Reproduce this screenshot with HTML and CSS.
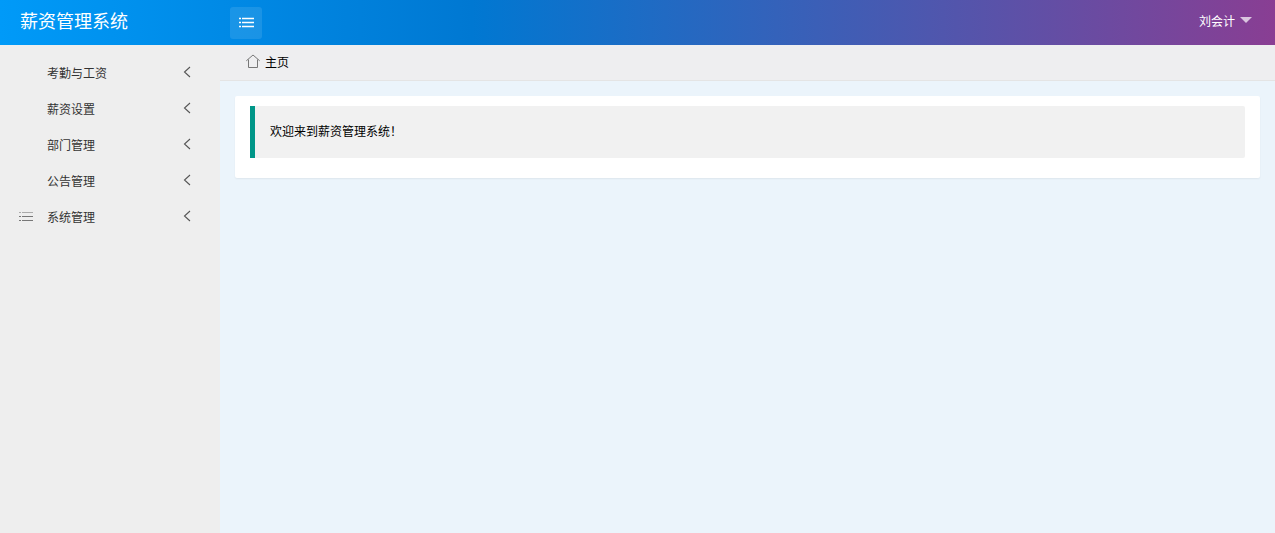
FILE: index.html
```html
<!DOCTYPE html>
<html lang="zh-CN">
<head>
    <meta charset="UTF-8">
    <title>薪资管理系统</title>
    <link rel="stylesheet" href="styles.css">
</head>
<body>
    <!-- 顶部导航 -->
    <header class="header">
        <div class="logo">薪资管理系统</div>
        <button class="toggle" type="button">
            <svg width="16" height="16" viewBox="0 0 16 16"><path d="M1 3.500h2M4 3.500h12M1 7.500h2M4 7.500h12M1 11.500h2M4 11.500h12"/></svg>
        </button>
        <div class="user">刘会计<span class="caret"></span></div>
    </header>

    <div class="wrap">
        <!-- 左侧菜单 -->
        <nav class="side">
            <a class="item"><i class="icon"></i><span>考勤与工资</span><svg class="arrow" width="8" height="12" viewBox="0 0 8 12"><path d="M7 1L1.5 6 7 11"/></svg></a>
            <a class="item"><i class="icon"></i><span>薪资设置</span><svg class="arrow" width="8" height="12" viewBox="0 0 8 12"><path d="M7 1L1.5 6 7 11"/></svg></a>
            <a class="item"><i class="icon"></i><span>部门管理</span><svg class="arrow" width="8" height="12" viewBox="0 0 8 12"><path d="M7 1L1.5 6 7 11"/></svg></a>
            <a class="item"><i class="icon"></i><span>公告管理</span><svg class="arrow" width="8" height="12" viewBox="0 0 8 12"><path d="M7 1L1.5 6 7 11"/></svg></a>
            <a class="item">
                <i class="icon"><svg width="15" height="12" viewBox="0 0 15 12"><path class="light" d="M0 1.500h2M3 1.500h11"/><path d="M0 5.500h2M3 5.500h11M0 9.500h2M3 9.500h11"/></svg></i>
                <span>系统管理</span><svg class="arrow" width="8" height="12" viewBox="0 0 8 12"><path d="M7 1L1.5 6 7 11"/></svg>
            </a>
        </nav>

        <!-- 主体内容 -->
        <main class="main">
            <div class="tabs">
                <svg class="home" width="14" height="14" viewBox="0 0 14 14"><path d="M.3 6.800L7 1l6.700 5.800M2.500 5.500v8h9v-8"/></svg>
                <span>主页</span>
            </div>
            <div class="card">
                <blockquote class="quote">欢迎来到薪资管理系统！</blockquote>
            </div>
        </main>
    </div>
</body>
</html>
```
FILE: styles.css
```css
* {
    box-sizing: border-box;
}
body {
    margin: 0;
    height: 100vh;
    display: flex;
    flex-direction: column;
    overflow: hidden;
    font: 12px/24px "Noto Sans CJK SC", sans-serif;
    color: #000;
    background: #ebf4fb;
}
svg {
    display: block;
    fill: none;
    stroke: #777;
}
.header {
    display: flex;
    align-items: center;
    flex: none;
    height: 45px;
    padding-right: 23px;
    color: #fff;
    background: linear-gradient(to right, #009af8, #0078d2 37%, #893e93);
}
.logo {
    width: 230px;
    padding: 0 0 6px 20px;
    font-size: 18px;
}
.toggle {
    display: flex;
    align-items: center;
    justify-content: center;
    width: 32px;
    height: 32px;
    padding: 0;
    border: none;
    border-radius: 3px;
    background: rgba(255, 255, 255, .1);
}
.toggle svg {
    stroke: #fff;
    stroke-width: 1.3;
}
.user {
    display: flex;
    align-items: center;
    margin-left: auto;
    padding-bottom: 3px;
}
.caret {
    margin: 0 0 3px 5px;
    border: 6px solid transparent;
    border-top-color: rgba(255, 255, 255, .7);
    border-bottom: none;
}
.wrap {
    display: flex;
    flex: 1;
}
.side {
    width: 220px;
    padding-top: 10px;
    background: #eee;
}
.item {
    display: flex;
    align-items: center;
    height: 36px;
    padding: 0 29px 0 19px;
    color: #333;
}
.icon {
    width: 28px;
}
.light {
    stroke: #aaa;
}
.arrow {
    margin: 0 0 2px auto;
    stroke: #555;
    stroke-width: 1.1;
}
.main {
    flex: 1;
}
.tabs {
    display: flex;
    align-items: center;
    height: 36px;
    padding: 0 26px 2px;
    border-bottom: 1px solid #e4e4e4;
    background: #eeeef0;
}
.home {
    margin: 0 5px 1px 0;
}
.card {
    height: 82px;
    margin: 15px;
    padding: 10px 15px;
    border-radius: 2px;
    background: #fff;
    box-shadow: 0 1px 2px rgba(0, 0, 0, .06);
}
.quote {
    height: 52px;
    margin: 0;
    padding: 13px 15px;
    border-left: 5px solid #009688;
    border-radius: 0 2px 2px 0;
    background: #f1f1f1;
}
```
